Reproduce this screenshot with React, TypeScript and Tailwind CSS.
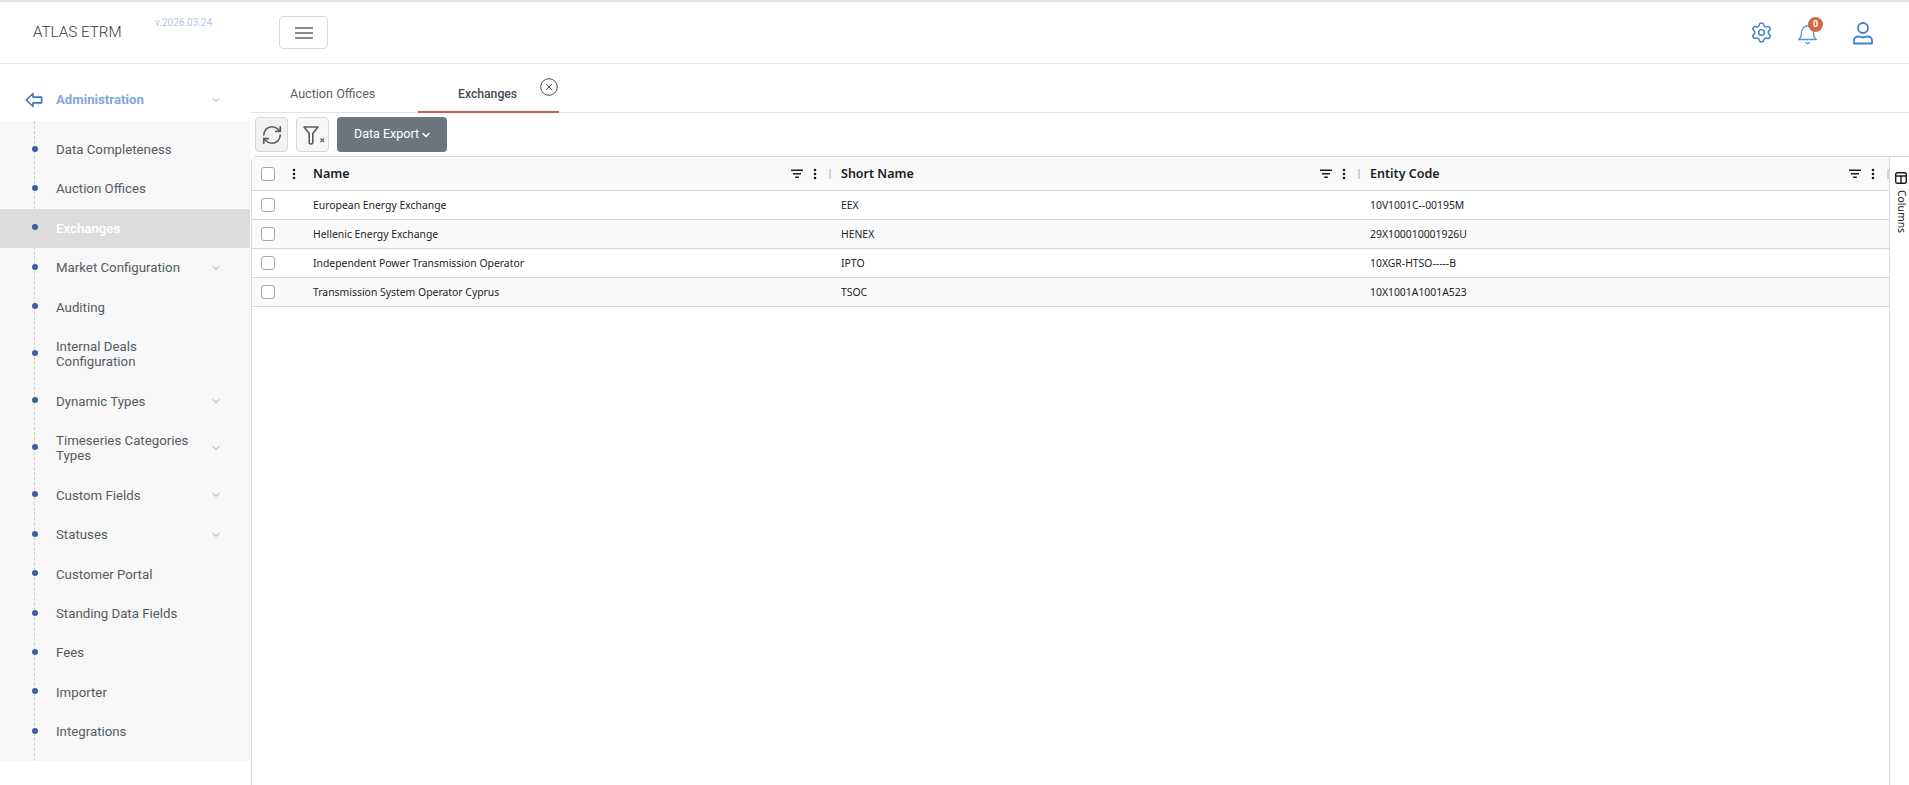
import React from 'react';
import { Settings, RefreshCw, ChevronDown } from 'lucide-react';

const MENU: { label: string; arrow?: boolean; active?: boolean }[] = [
  { label: 'Data Completeness' },
  { label: 'Auction Offices' },
  { label: 'Exchanges', active: true },
  { label: 'Market Configuration', arrow: true },
  { label: 'Auditing' },
  { label: 'Internal Deals Configuration' },
  { label: 'Dynamic Types', arrow: true },
  { label: 'Timeseries Categories Types', arrow: true },
  { label: 'Custom Fields', arrow: true },
  { label: 'Statuses', arrow: true },
  { label: 'Customer Portal' },
  { label: 'Standing Data Fields' },
  { label: 'Fees' },
  { label: 'Importer' },
  { label: 'Integrations' },
];

const ROWS = [
  ['European Energy Exchange', 'EEX', '10V1001C--00195M'],
  ['Hellenic Energy Exchange', 'HENEX', '29X100010001926U'],
  ['Independent Power Transmission Operator', 'IPTO', '10XGR-HTSO-----B'],
  ['Transmission System Operator Cyprus', 'TSOC', '10X1001A1001A523'],
];

function Dots() {
  return (
    <svg width="4" height="12" viewBox="0 0 4 12" className="shrink-0" fill="#181d1f">
      <circle cx="2" cy="2" r="1.3" />
      <circle cx="2" cy="6" r="1.3" />
      <circle cx="2" cy="10" r="1.3" />
    </svg>
  );
}

function HeaderFilter() {
  return (
    <svg width="12" height="10" viewBox="0 0 12 10" className="shrink-0" fill="#181d1f">
      <rect x="0" y="0.5" width="12" height="1.5" />
      <rect x="2" y="4" width="8" height="1.5" />
      <rect x="4.2" y="7.5" width="3.6" height="1.5" />
    </svg>
  );
}

function Box() {
  return <span className="block w-[14px] h-[14px] rounded-[3px] border border-[#a8a8a8] bg-white shrink-0" />;
}

function HeaderCell({ title, width }: { title: string; width: string }) {
  return (
    <div className={`flex items-center h-full shrink-0 ${width}`}>
      <span className="flex-1 text-[12.5px] font-semibold text-[#181d1f] pt-[2px]">{title}</span>
      <span className="mr-[10px]"><HeaderFilter /></span>
      <Dots />
      <span className="ml-[12px] mr-[10px] w-[2px] h-[10px] bg-[#d4d4d4]" />
    </div>
  );
}

export default function App() {
  return (
    <div className="h-[785px] w-[1909px] overflow-hidden bg-white flex flex-col border-t-2 border-[#e4e4e4] font-['Roboto',sans-serif]">
      <div className="flex flex-1 min-h-0">
        {/* sidebar */}
        <aside className="w-[250px] shrink-0 flex flex-col">
          <div className="h-[62px] flex items-start border-b border-[#ebebeb] relative">
            <span className="ml-[33px] mt-[19px] text-[15.2px] font-light text-[#343a40]">ATLAS ETRM</span>
            <span className="absolute left-[155px] top-[13px] text-[10px] text-[#b4c6e4]">v.2026.03.24</span>
          </div>
          <div className="h-[57px] flex items-center pt-[14px]">
            <svg width="18" height="16" viewBox="0 0 18 16" className="ml-[25px]" fill="none" stroke="#3a78c9" strokeWidth="1.6" strokeLinejoin="round">
              <path d="M1.2 8 8 1.5v3.6h8.6v5.8H8v3.6z" />
            </svg>
            <span className="ml-[13px] text-[13.2px] font-bold text-[#83a8de]">Administration</span>
            <ChevronDown size={12} className="ml-auto mr-[28px] text-[#83a8de]" />
          </div>
          <nav className="relative bg-[#f7f7f7] h-[640px] pt-[9px]">
            <span className="absolute left-[34px] top-0 bottom-0 border-l border-dashed border-[#cfcfcf]" />
            {MENU.map(m => (
              <div key={m.label} className={`relative flex items-center pl-[56px] pr-[28px] py-[12px] ${m.active ? 'bg-[#dcdcdc]' : ''}`}>
                <span className="absolute left-[32px] top-1/2 -mt-[4px] w-[6px] h-[6px] rounded-full bg-[#36639f]" />
                <span className={`flex-1 text-[13.25px] leading-[15.37px] max-w-[142px] ${m.active ? 'text-white font-medium' : 'text-[#555b61]'}`}>{m.label}</span>
                {m.arrow && <ChevronDown size={12} className="ml-auto text-[#83a8de]" />}
              </div>
            ))}
          </nav>
        </aside>

        {/* main */}
        <main className="flex-1 min-w-0 flex flex-col">
          <header className="h-[62px] shrink-0 flex items-center border-b border-[#ebebeb]">
            <button className="ml-[29px] w-[49px] h-[33px] rounded-[4px] border border-[#d8d8d8] flex flex-col items-center justify-center gap-[3px]">
              <span className="w-[18px] h-[2px] bg-[#8a8a8a]" />
              <span className="w-[18px] h-[2px] bg-[#8a8a8a]" />
              <span className="w-[18px] h-[2px] bg-[#8a8a8a]" />
            </button>
            <div className="ml-auto flex items-center mr-[35px] gap-[24px]">
              <Settings size={23} strokeWidth={1.5} className="text-[#3f7fd0]" />
              <div className="relative w-[22px] h-[24px]">
                <svg width="22" height="24" viewBox="0 0 22 24" fill="none" stroke="#5b92d8" strokeWidth="1.3" strokeLinejoin="round">
                  <path d="M1.5 18.5c1.8-1.2 2.9-2.8 2.9-6.5 0-3.8 2.6-7 6-7s6.1 3.2 6.1 7c0 3.7 1.2 5.3 3 6.5z" />
                  <path d="M8.5 21.2l2.2 1.6 2.2-1.6" />
                </svg>
                <span className="absolute -top-[4px] left-[11px] w-[15px] h-[15px] rounded-full bg-[#cf6a45] text-white text-[9px] font-bold leading-[15px] text-center">0</span>
              </div>
              <svg width="22" height="24" viewBox="0 0 22 24" className="ml-[9px]" fill="none" stroke="#3f7fd0" strokeWidth="1.8">
                <circle cx="11" cy="7" r="5" />
                <path d="M2 22.5v-3c0-2.5 2.2-4 4.5-4 1.5 0 2.7 1 4.5 1s3-1 4.5-1c2.3 0 4.5 1.5 4.5 4v3z" strokeLinejoin="round" />
              </svg>
            </div>
          </header>

          {/* tabs */}
          <div className="h-[49px] shrink-0 flex border-b border-[#e4e4e4]">
            <div className="w-[142px] pl-[40px] flex items-center pt-[13px] mr-[26px] text-[12.6px] text-[#5c6268] whitespace-nowrap">Auction Offices</div>
            <div className="relative w-[141px] -mb-px border-b-2 border-[#c4604f] flex items-center pt-[13px] pl-[40px] text-[12.2px] font-medium text-[#454b52]">
              Exchanges
              <svg width="18" height="18" viewBox="0 0 18 18" className="absolute left-[122px] top-[14px]" fill="none" stroke="#4a5560" strokeWidth="1">
                <circle cx="9" cy="9" r="8.3" />
                <path d="M6 6l6 6M12 6l-6 6" />
              </svg>
            </div>
          </div>

          {/* toolbar */}
          <div className="h-[43px] shrink-0 flex items-center pl-[5px] gap-[8px]">
            <button className="w-[33px] h-[35px] rounded-[4px] border border-[#d8d8d8] bg-[#f2f2f2] flex items-center justify-center">
              <RefreshCw size={22} strokeWidth={1.8} className="text-[#555b61]" />
            </button>
            <button className="w-[33px] h-[35px] rounded-[4px] border border-[#d8d8d8] bg-[#f7f7f7] flex items-center justify-center">
              <svg width="24" height="24" viewBox="0 0 24 24" fill="none" stroke="#555b61" strokeWidth="1.6" strokeLinejoin="round">
                <path d="M3 4h14l-5.2 6.5v9c0 2-3.6 2-3.6 0v-9z" />
                <path d="M19.5 15.5l3.5 3.5M23 15.5l-3.5 3.5" strokeWidth="1.1" />
              </svg>
            </button>
            <button className="w-[110px] h-[35px] rounded-[4px] bg-[#6c757d] text-white text-[12.5px] flex items-center justify-center gap-[1px] pl-[2px]">
              Data Export
              <ChevronDown size={12} strokeWidth={3} />
            </button>
          </div>

          {/* grid */}
          <div className="flex-1 min-h-0 ml-px flex border-l border-t border-[#d9d9d9] rounded-tl-[6px] font-['Noto_Sans',sans-serif]">
            <div className="flex-1 min-w-0 flex flex-col overflow-hidden">
              <div className="h-[34px] shrink-0 flex items-center bg-[#f9f9f9] border-b border-[#d5d5d5]">
                <span className="ml-[9px] w-[52px] flex items-center shrink-0">
                  <Box />
                  <span className="ml-[17px]"><Dots /></span>
                </span>
                <HeaderCell title="Name" width="w-[528px]" />
                <HeaderCell title="Short Name" width="w-[529px]" />
                <HeaderCell title="Entity Code" width="w-[529px]" />
              </div>
              {ROWS.map((r, i) => (
                <div key={r[0]} className={`h-[29px] shrink-0 flex items-center border-b border-[#d5d5d5] text-[10.4px] text-[#181d1f] ${i % 2 ? 'bg-[#fafafa]' : 'bg-white'}`}>
                  <span className="ml-[9px] w-[52px] shrink-0 flex"><Box /></span>
                  <span className="w-[528px] shrink-0 pt-px">{r[0]}</span>
                  <span className="w-[529px] shrink-0 pt-px">{r[1]}</span>
                  <span className="w-[519px] shrink-0 pt-px">{r[2]}</span>
                </div>
              ))}
            </div>
            <div className="w-[20px] shrink-0 border-l border-[#d9d9d9] flex flex-col items-center pl-[3px] pt-[15px]">
              <svg width="12" height="12" viewBox="0 0 12 12" fill="none" stroke="#181d1f" strokeWidth="1.4">
                <rect x="0.7" y="0.7" width="10.6" height="10.6" rx="1.5" />
                <path d="M0.7 4h10.6M6 4v7.3" />
              </svg>
              <span className="mt-[6px] text-[10.4px] text-[#181d1f] [writing-mode:vertical-rl]">Columns</span>
            </div>
          </div>
        </main>
      </div>
    </div>
  );
}
